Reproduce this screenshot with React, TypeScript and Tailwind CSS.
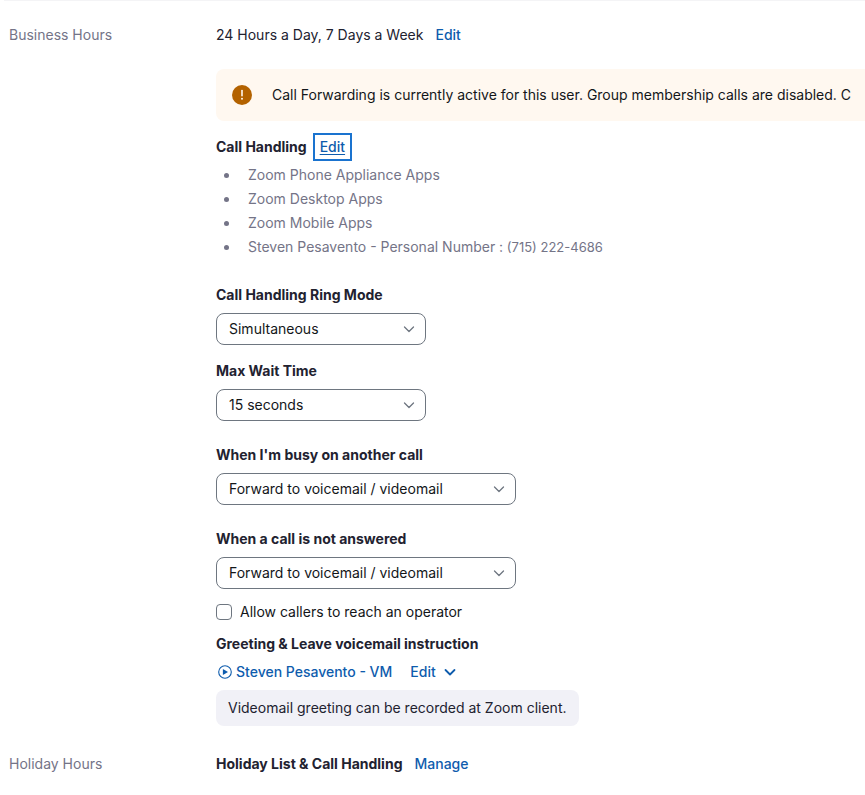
import { useState, type ReactNode } from "react";

const RING_MODES = ["Simultaneous", "Sequential"];
const WAIT_TIMES = ["15 seconds", "30 seconds", "45 seconds"];
const FORWARD_OPTIONS = ["Forward to voicemail / videomail", "Disconnect"];

const DEVICES = [
  { name: "Zoom Phone Appliance Apps" },
  { name: "Zoom Desktop Apps" },
  { name: "Zoom Mobile Apps" },
  { name: "Steven Pesavento - Personal Number :", phone: "(715) 222-4686" },
];

function Chevron({ className }: { className: string }) {
  return (
    <svg
      viewBox="0 0 12 12"
      fill="none"
      stroke="currentColor"
      strokeLinecap="round"
      strokeLinejoin="round"
      className={className}
      aria-hidden="true"
    >
      <path d="M1.5 4 6 8.5 10.5 4" />
    </svg>
  );
}

function SettingsRow({
  title,
  children,
}: {
  title: string;
  children: ReactNode;
}) {
  return (
    <section className="flex">
      <h2 className="w-[207px] shrink-0 text-[#747487]">{title}</h2>
      <div className="min-w-0 flex-1">{children}</div>
    </section>
  );
}

function SelectField({
  id,
  label,
  options,
  width,
}: {
  id: string;
  label: string;
  options: string[];
  width: string;
}) {
  return (
    <div>
      <label htmlFor={id} className="block font-bold">
        {label}
      </label>
      <div className={`relative mt-1.5 max-w-full ${width}`}>
        <select
          id={id}
          className="block h-8 w-full appearance-none rounded-lg border border-[#6e7680] bg-white pr-8 pl-3 text-[#131619]"
        >
          {options.map((option) => (
            <option key={option}>{option}</option>
          ))}
        </select>
        <Chevron className="pointer-events-none absolute top-2.5 right-[11px] size-3 stroke-[1.3] text-[#6e7680]" />
      </div>
    </div>
  );
}

export default function App() {
  const [operator, setOperator] = useState(false);

  return (
    <main className="overflow-hidden bg-white pb-4 font-[Inter,sans-serif] text-sm/6 text-[#222230]">
      <hr className="ml-1 border-[#f4f4f6]" />
      <div className="flex flex-col gap-[26px] pt-[22px] pl-[9px]">
        <SettingsRow title="Business Hours">
          <p>
            24 Hours a Day, 7 Days a Week
            <a href="#hours" className="ml-3 font-medium text-[#0e5cad]">
              Edit
            </a>
          </p>

          <div className="mt-[22px] flex h-[52px] items-center gap-5 overflow-hidden rounded-l-lg bg-[#fff8f0] pl-4 whitespace-nowrap text-[#131619]">
            <svg viewBox="0 0 20 20" className="size-5 shrink-0" aria-hidden="true">
              <circle cx="10" cy="10" r="10" fill="#b36200" />
              <path d="M10 5.6v5.2" stroke="#fff8f0" strokeWidth="1.6" strokeLinecap="round" />
              <circle cx="10" cy="13.8" r="1" fill="#fff8f0" />
            </svg>
            <p>
              Call Forwarding is currently active for this user. Group
              membership calls are disabled. C
            </p>
          </div>

          <div className="mt-3 flex h-7 items-center gap-1.5">
            <h3 className="font-bold">Call Handling</h3>
            <a
              href="#call-handling"
              className="border-2 border-[#1a73cf] px-[5px] font-medium text-[#0e5cad] underline underline-offset-2"
            >
              Edit
            </a>
          </div>
          <ul className="mt-0.5 list-disc pl-6 text-[#747487]">
            {DEVICES.map(({ name, phone }) => (
              <li key={name} className="pl-2">
                {name}
                {phone && <span className="text-[13px]"> {phone}</span>}
              </li>
            ))}
          </ul>

          <div className="mt-6 flex flex-col gap-3.5">
            <SelectField
              id="ring-mode"
              label="Call Handling Ring Mode"
              options={RING_MODES}
              width="w-[210px]"
            />
            <SelectField
              id="wait-time"
              label="Max Wait Time"
              options={WAIT_TIMES}
              width="w-[210px]"
            />
          </div>
          <div className="mt-[22px] flex flex-col gap-[22px]">
            <SelectField
              id="busy"
              label="When I'm busy on another call"
              options={FORWARD_OPTIONS}
              width="w-[300px]"
            />
            <SelectField
              id="not-answered"
              label="When a call is not answered"
              options={FORWARD_OPTIONS}
              width="w-[300px]"
            />
          </div>

          <label className="mt-[11px] flex items-center gap-2 text-[#131619]">
            <input
              type="checkbox"
              checked={operator}
              onChange={(e) => setOperator(e.target.checked)}
              className="size-4 appearance-none rounded border border-[#6e7680] checked:bg-[#0e5cad]"
            />
            Allow callers to reach an operator
          </label>

          <h3 className="mt-2 font-bold">
            Greeting &amp; Leave voicemail instruction
          </h3>
          <div className="mt-1 flex items-center gap-[18px] font-medium text-[#0e5cad]">
            <button type="button" className="flex items-center gap-1 pl-0.5">
              <svg viewBox="0 0 14 14" fill="none" className="size-3.5" aria-hidden="true">
                <circle cx="7" cy="7" r="6.3" stroke="currentColor" strokeWidth="1.1" />
                <path d="M4.9 4.1v5.8L10 7z" fill="currentColor" />
              </svg>
              Steven Pesavento - VM
            </button>
            <button type="button" className="flex items-center gap-2">
              Edit
              <Chevron className="size-3 stroke-[1.8]" />
            </button>
          </div>
          <p className="mt-1.5 w-fit rounded-lg bg-[#f1f1f7] px-3 py-1.5">
            Videomail greeting can be recorded at Zoom client.
          </p>
        </SettingsRow>

        <SettingsRow title="Holiday Hours">
          <div className="flex gap-3">
            <h3 className="font-bold">Holiday List &amp; Call Handling</h3>
            <a href="#holidays" className="font-medium text-[#0e5cad]">
              Manage
            </a>
          </div>
        </SettingsRow>
      </div>
    </main>
  );
}
